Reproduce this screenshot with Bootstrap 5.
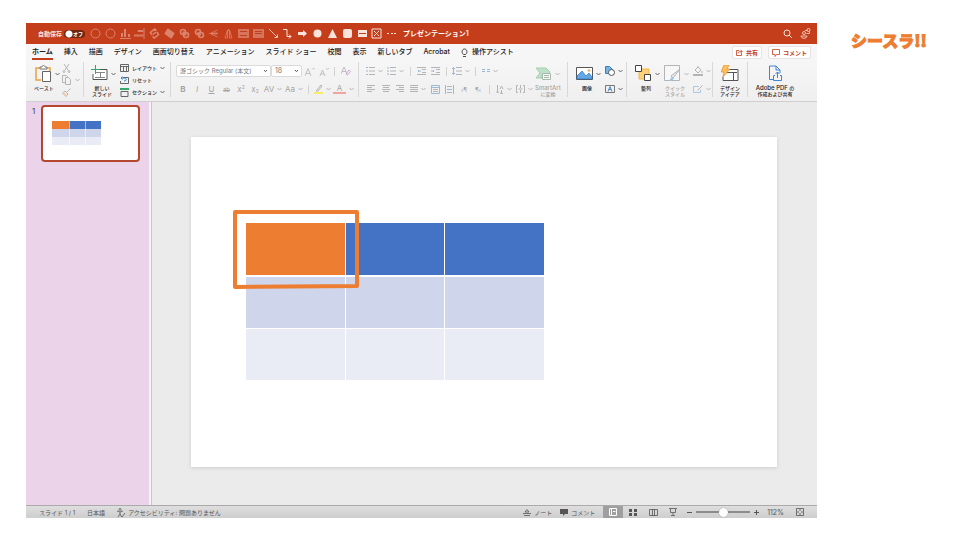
<!DOCTYPE html>
<html lang="ja">
<head>
<meta charset="utf-8">
<meta name="viewport" content="width=device-width, initial-scale=1">
<title>プレゼンテーション1</title>
<link href="https://cdn.jsdelivr.net/npm/bootstrap@5.3.0/dist/css/bootstrap.min.css" rel="stylesheet">
<style>
:root{--brand:#c43e1c;--orange:#ed7d31;--blue:#4472c4}
body{font-family:Inter,"Noto Sans CJK JP",sans-serif;font-size:6px;line-height:7px;color:#222;background:#fff}
.page{min-height:100vh;padding:23px 0 22px 26px}
.side{width:143px;padding:5px 0 0 34px}
.logo{font-family:"Noto Sans CJK JP",sans-serif;font-weight:900;font-size:16px;line-height:24px;color:var(--orange);-webkit-text-stroke:1px var(--orange)}
.app-frame{min-width:0;background:#f3f2f1}
svg{display:block;fill:none;stroke:currentColor;stroke-width:1;flex:none}
.tool{--bs-btn-padding-x:0;--bs-btn-padding-y:0;--bs-btn-border-width:0;--bs-btn-font-size:6px;--bs-btn-line-height:7px;--bs-btn-border-radius:0;--bs-btn-color:inherit;display:flex;align-items:center;justify-content:center;gap:3px;min-width:0;white-space:nowrap}
.titlebar{height:21px;background:var(--brand);color:#fbe3dc;padding:0 6px 0 12px}
.autosave{width:50px;gap:2px;font-weight:600;white-space:nowrap}
.autosave input{appearance:none;width:21px;height:8px;border-radius:4px;background:radial-gradient(circle at 5px 4px,#fff 3px,transparent 4px) #6d2814;margin:0}
.switch-box{position:relative;display:flex}
.switch-box span{position:absolute;right:2px;top:0;font-size:5px;line-height:8px;color:#fff}
.quick{width:311px}
.quick .tool{flex:1}
.dim{opacity:.42}
.doc-name{font-size:7px;line-height:10px;font-weight:600;color:#fff;margin-left:4px}
.tabs{height:16px;padding:0 6px;background:#f7f6f6}
.tabs a{font-size:7px;line-height:16px;height:16px;font-weight:500;color:#222;text-decoration:none;white-space:nowrap}
.tabs a.active{box-shadow:inset 0 -2px var(--brand);font-weight:700}
.tab-list{gap:11px}
.act-row{gap:6px}
.act{--bs-btn-color:var(--brand);background:#fff;border:1px solid #e6e3e2;border-radius:2px;height:13px;padding:0 3px;font-weight:600;margin-top:2px}
.ribbon{height:42px;padding:2px 0 4px;background:linear-gradient(#f7f6f6,#f0efef);border-bottom:1px solid #cfcfcf}
.ribbon svg{color:#666}
.ribbon .off svg{color:#b4b4b4}
.ribbon .text-primary{color:#3d84d6!important}
.grp{border-right:1px solid #d8d8d8;flex:none}
.g-paste{width:58px;padding-left:8px}
.g-slides{width:87px;padding-left:7px}
.g-font{width:188px;padding-left:5px}
.g-para{width:209px;padding-left:5px}
.g-insert{width:59px;padding-left:8px}
.g-style{width:86px;padding-left:8px}
.g-idea{width:35px}
.g-pdf{width:54px;border:0}
.big{flex-direction:column;justify-content:flex-start;gap:3px}
.big .face{display:flex;align-items:center;gap:3px;padding-top:3px;height:20px}
.cap{font-size:5px;line-height:6px;font-weight:500;text-align:center;padding-right:3px}
.cap b{font-size:6px;font-weight:500}
.g-idea .cap,.g-pdf .cap,.g-para .cap{padding:0}
.off{color:#a5a5a5}
.rows3{display:grid;grid-template-rows:repeat(3,12px)}
.rows2{display:grid;grid-template-rows:18px 18px}
.line{display:grid;align-items:center}
.f1{grid-template-columns:95px 31px 15px 14px 7px 16px}
.f2{grid-template-columns:14px 14px 15px 15px 14px 14px 22px 20px 8px 21px 21px}
.p1{grid-template-columns:21px 21px 8px 14px 14px 8px 22px 7px 22px}
.p2{grid-template-columns:14px 15px 14px 21px 14px 15px 14px 14px 8px 21px 21px}
.bar{width:1px;height:9px;background:#d2d2d2;justify-self:center}
.pick{appearance:none;height:12px;font-size:6px;line-height:10px;padding:0 8px 0 3px;color:#777;border:1px solid #dadada;border-radius:2px;background:#fff url("data:image/svg+xml,%3Csvg xmlns='http://www.w3.org/2000/svg' viewBox='0 0 5 4'%3E%3Cpath d='M1 1l1.5 1.7L4 1' fill='none' stroke='%23555'/%3E%3C/svg%3E") right 2px center/5px 4px no-repeat;width:100%;min-width:0}
.pick.num-pick{font-size:7px}
.txt{font-size:8px;line-height:9px}
.txt sup,.txt sub{font-size:5px}
.ink{border-bottom:2px solid #f0a49c;line-height:8px}
.small-cap{font-size:5px;line-height:7px;font-weight:500}
.work{min-height:0}
.thumbs{width:126px;background:#ebd4ea;border-right:1px solid #c8c8c8;box-shadow:inset -2px 0 #f7f2f7;padding:3px 0 0 6px;gap:6px}
.thumb{width:99px;height:57px;background:#fff;border:2px solid #b3472f;border-radius:4px;padding:14px 9px}
.num{font-size:8px;line-height:13px;color:#444}
.stage{background:#ebebeb;padding:35px 40px 37px 39px;min-width:0}
.slide{width:100%;aspect-ratio:16/9;background:#fff;box-shadow:0 1px 4px #0002;padding:86px 0 0 55px}
.grid-wrap{position:relative;width:298px}
.cells{border-collapse:separate;border-spacing:1px;table-layout:fixed;width:calc(100% + 2px);margin:-1px}
.cells td{height:51px;padding:0;background:#e9ebf5}
.cells tr:nth-child(2) td{background:#cfd5ea}
.cells tr:first-child td{height:52px;background:var(--blue)}
.cells tr:first-child td:first-child{background:var(--orange)}
.cells.main tr:nth-child(2) td{border-top:1px solid #fff;height:52px}
.mini{border-spacing:0;width:49px;margin:0}
.mini td,.mini tr:first-child td{height:8px}
.mini td+td{border-left:1px solid #fff8}
.outline{position:absolute;left:-13px;top:-12px;color:var(--orange)}
.status{height:13px;background:linear-gradient(#dedede,#cecece);border-top:1px solid #aaa;color:#555;padding:0 13px;white-space:nowrap}
.status .on{background:#9f9f9f;color:#fff}
.view{width:20px;height:12px}
.percent{font-size:7px}
.zoomer{appearance:none;width:54px;height:10px;background:linear-gradient(#8c8c8c,#8c8c8c) center/100% 2px no-repeat;margin:0}
.zoomer::-webkit-slider-thumb{appearance:none;width:9px;height:9px;border-radius:50%;background:#fff;box-shadow:0 0 1px #777}
</style>
<script src="https://cdn.jsdelivr.net/npm/bootstrap@5.3.0/dist/js/bootstrap.bundle.min.js"></script>
</head>
<body>
<svg width="0" height="0" class="position-absolute" aria-hidden="true">
<symbol id="chev" viewBox="0 0 5 4"><path d="M.5 1l2 2 2-2"/></symbol>
</svg>
<div class="page d-flex">
<main class="app-frame d-flex flex-column flex-fill">
<header class="titlebar d-flex align-items-center">
  <label class="autosave d-flex align-items-center">自動保存<span class="switch-box"><input type="checkbox" role="switch"><span>オフ</span></span></label>
  <div class="quick d-flex">
    <button class="btn tool dim" aria-label="円"><svg width="11" height="11"><circle cx="5.500" cy="5.500" r="4.500"/></svg></button>
    <button class="btn tool dim" aria-label="楕円"><svg width="11" height="11"><circle cx="5.500" cy="5.500" r="4.500"/></svg></button>
    <button class="btn tool dim" aria-label="下揃え"><svg width="11" height="11"><path d="M0 10.500h11"/><path d="M1 5h2v4H1zM4 1h2v8H4zM8 6h2v3H8z" fill="currentColor" stroke="none"/></svg></button>
    <button class="btn tool dim" aria-label="右揃え"><svg width="11" height="11"><path d="M10 0v11M4 2.500h5v1H4zM0 7h9v1H0z"/></svg></button>
    <button class="btn tool dim" aria-label="接合"><svg width="11" height="11"><path d="M7.500 2.500L5.500 1 1.500 4.500 3 7M3.500 8.500l2 1.500 4-3.500L8 4M4 6.500l3-2.500" stroke-width="1.600"/></svg></button>
    <button class="btn tool dim" aria-label="結合"><svg width="11" height="11"><path d="M4 1.500l5.500 4-2.500 4-5.500-4z" fill="currentColor" stroke-width="2" stroke-linejoin="round"/></svg></button>
    <button class="btn tool dim" aria-label="切り出し"><svg width="11" height="11"><circle cx="4" cy="4" r="2.500" stroke-width="1.600"/><circle cx="7" cy="7" r="2.500" stroke-width="1.600"/><path d="M4 4h3v3H4z" fill="currentColor"/></svg></button>
    <button class="btn tool dim" aria-label="重なり抽出"><svg width="11" height="11"><circle cx="4" cy="4" r="2.500" stroke-width="1.600"/><circle cx="7" cy="7" r="2.500" stroke-width="1.600"/><path d="M3.500 4.500l3 3" stroke-width="2"/></svg></button>
    <button class="btn tool dim" aria-label="左右反転"><svg width="11" height="11"><path d="M1 5.500h9M9.500 2L3 5h6.500M9.500 9L3 6h6.500" stroke-width=".8"/></svg></button>
    <button class="btn tool dim" aria-label="上下反転"><svg width="11" height="11"><path d="M5.500 1v2M4.500 2v8H2zM6.500 2v8H9z" stroke-width=".8"/></svg></button>
    <button class="btn tool dim" aria-label="中央配置"><svg width="11" height="11"><path d="M0 1h11v9H0z" fill="currentColor" stroke="none" opacity=".8"/><path d="M2 3.500h7M2 7.500h7" stroke="#c43e1c"/></svg></button>
    <button class="btn tool dim" aria-label="上配置"><svg width="11" height="11"><path d="M0 1h11v9H0z" fill="currentColor" stroke="none" opacity=".8"/><path d="M2 3.500h7M2 5.500h7" stroke="#c43e1c"/></svg></button>
    <button class="btn tool" aria-label="線"><svg width="11" height="11"><path d="M1 1l8 8M9.500 6.500v3h-3" stroke-width=".8"/></svg></button>
    <button class="btn tool" aria-label="コネクタ"><svg width="11" height="11"><path d="M1 1.500h4v7h4M7 6.500l2 2-2 2"/></svg></button>
    <button class="btn tool" aria-label="矢印"><svg width="11" height="11"><path d="M1 4h5V2l4 3.500L6 9V7H1z" fill="currentColor" stroke="none"/></svg></button>
    <button class="btn tool" aria-label="塗り円"><svg width="11" height="11"><circle cx="5.500" cy="5.500" r="4" fill="currentColor" stroke="none"/></svg></button>
    <button class="btn tool" aria-label="三角形"><svg width="11" height="11"><path d="M5.500 1l4.500 9H1z" fill="currentColor" stroke="none"/></svg></button>
    <button class="btn tool" aria-label="角丸四角形"><svg width="11" height="11"><rect x="1" y="1" width="9" height="9" rx="2" fill="currentColor" stroke="none"/></svg></button>
    <button class="btn tool" aria-label="テキスト"><svg width="11" height="11"><path d="M1 2h9v7H1z" fill="currentColor" stroke="none"/><path d="M2 5.500h7" stroke="#c43e1c"/></svg></button>
    <button class="btn tool" aria-label="閉じる"><svg width="11" height="11"><path d="M1 1h9v9H1zM3 3l5 5M8 3L3 8"/></svg></button>
    <button class="btn tool" aria-label="その他"><svg width="11" height="11"><path d="M1 5h2v1H1zM5 5h2v1H5zM8 5h2v1H8z" fill="currentColor" stroke="none"/></svg></button>
  </div>
  <div class="doc-name me-auto">プレゼンテーション1</div>
  <button class="btn tool me-2" aria-label="検索"><svg width="9" height="9"><circle cx="4" cy="4" r="3"/><path d="M6 6l3 3"/></svg></button>
  <button class="btn tool" aria-label="共同作業"><svg width="11" height="11"><circle cx="4" cy="5" r="1.500" stroke-width=".8"/><path d="M1 8h6c0 3-6 3-6 0zM5 2.500h2M6.500 5.500h3v-2" stroke-width=".8"/><circle cx="8.500" cy="2" r="1.500" stroke-width=".8"/></svg></button>
</header>
<nav class="tabs d-flex align-items-start justify-content-between">
  <div class="tab-list d-flex">
    <a href="#" class="active">ホーム</a><a href="#">挿入</a><a href="#">描画</a><a href="#">デザイン</a><a href="#">画面切り替え</a><a href="#">アニメーション</a><a href="#">スライド ショー</a><a href="#">校閲</a><a href="#">表示</a><a href="#">新しいタブ</a><a href="#">Acrobat</a>
    <a href="#" class="d-flex align-items-center gap-1"><svg width="7" height="9"><path d="M2.500 6.500C0 4.500 1 1 3.500 1S7 4.500 4.500 6.500zM2 8.500h3" stroke-width=".8"/></svg>操作アシスト</a>
  </div>
  <div class="d-flex act-row">
    <button class="btn tool act"><svg width="7" height="7"><path d="M3 1.500H.5v5h5V4M2 4.500C2 3 3 2.500 6 2.500M4.500.8l1.700 1.700-1.700 1.700" stroke-width=".8"/></svg>共有</button>
    <button class="btn tool act"><svg width="8" height="8"><path d="M.5.5h7v5h-3L3 7.500v-2H.5z" stroke-width=".8"/></svg>コメント</button>
  </div>
</nav>
<section class="ribbon d-flex" aria-label="リボン">
  <div class="grp g-paste d-flex">
    <button class="btn tool big"><span class="face"><svg width="17" height="17"><path d="M5 3H1v12h5M12 3h3v3" stroke="#e8a33d" stroke-width="1.500"/><path d="M5 4V2h2c0-2 3-2 3 0h2v2z" stroke="#777" fill="#fff"/><path d="M7.500 6.500h8v10h-8z" stroke="#666" fill="#fff"/></svg><svg width="5" height="4"><use href="#chev"/></svg></span><span class="cap pe-2">ペースト</span></button>
    <div class="rows3 off">
      <button class="btn tool justify-content-start" aria-label="切り取り"><svg width="9" height="9"><path d="M2 0l4 6M7 0L3 6"/><circle cx="2" cy="7.500" r="1"/><circle cx="7" cy="7.500" r="1"/></svg></button>
      <button class="btn tool" aria-label="コピー"><svg width="10" height="10"><path d="M3.500 7.500h-3v-7h4l1 1v1M3.500 2.500h3l2 2v5h-5z"/></svg><svg width="5" height="4"><use href="#chev"/></svg></button>
      <button class="btn tool justify-content-start" aria-label="書式のコピー"><svg width="9" height="9"><path d="M8.500.5L5 4M3 3l3 3-2 2.500L.5 5z"/><path d="M2 4l3 3-1 1.500L.5 5z" fill="#f2cda5" stroke="none"/></svg></button>
    </div>
  </div>
  <div class="grp g-slides d-flex">
    <button class="btn tool big"><span class="face"><svg width="17" height="17"><path d="M6 4.500h10v10H2V9" stroke="#555" fill="#fff"/><path d="M5 7.500h9M9.500 7.500v5M4 12.500h10" stroke="#888"/><path d="M4.500 0v9M0 4.500h9" stroke="#2fa866"/></svg><svg width="5" height="4"><use href="#chev"/></svg></span><span class="cap">新しい<br>スライド</span></button>
    <div class="rows3 small-cap ms-1">
      <button class="btn tool justify-content-start small-cap"><svg width="9" height="8"><path d="M.5.5h8v7h-8z"/><path d="M0 2.500h9M3.500 3v4M6.500 3v4"/></svg><span>レイアウト</span><svg width="5" height="4"><use href="#chev"/></svg></button>
      <button class="btn tool justify-content-start small-cap"><svg width="9" height="8"><path d="M3 1.500h5.500v6h-8V5"/><path d="M4 5c3 0 3-3 0-3H1M2.500.5L1 2l1.500 1.500" stroke="#2b83cf"/></svg><span>リセット</span></button>
      <button class="btn tool justify-content-start small-cap"><svg width="9" height="9"><path d="M0 1h9" stroke="#38a86d" stroke-width="2"/><path d="M1 3.500h7v5H1z"/></svg><span>セクション</span><svg width="5" height="4"><use href="#chev"/></svg></button>
    </div>
  </div>
  <div class="grp g-font rows2 off">
    <div class="line f1">
      <select class="pick" aria-label="フォント"><option>游ゴシック Regular (本文)</option></select>
      <select class="pick num-pick" aria-label="サイズ"><option>18</option></select>
      <button class="btn tool" aria-label="拡大文字"><svg width="10" height="9"><path d="M0 9l3-7.500L6 9M1 6.500h4M7 2.500L8.500 1 10 2.500" stroke-width=".8"/></svg></button><button class="btn tool" aria-label="縮小文字"><svg width="10" height="9"><path d="M1 9l2.500-6L6 9M2 7h3M7 1l1.500 1.500L10 1" stroke-width=".8"/></svg></button><span class="bar"></span>
      <button class="btn tool" aria-label="書式のクリア"><svg width="10" height="10"><path d="M0 8l3-7 3 7M1 5.500h4" stroke-width=".8"/><path d="M5 8l3-4 1.500 1.500L6.500 9z" stroke="#c39acb" stroke-width=".8"/></svg></button>
    </div>
    <div class="line f2">
      <button class="btn tool txt"><b>B</b></button><button class="btn tool txt"><i>I</i></button><button class="btn tool txt"><u>U</u></button><button class="btn tool"><s>ab</s></button><button class="btn tool txt"><span>x<sup>2</sup></span></button><button class="btn tool txt"><span>x<sub>2</sub></span></button>
      <button class="btn tool txt">AV<svg width="5" height="4"><use href="#chev"/></svg></button>
      <button class="btn tool txt">Aa<svg width="5" height="4"><use href="#chev"/></svg></button>
      <span class="bar"></span>
      <button class="btn tool" aria-label="蛍光ペン"><svg width="9" height="10"><path d="M3 6l4-5 1 1-4 5H2z"/><path d="M0 9h9" stroke="#f4ef6a" stroke-width="2"/></svg><svg width="5" height="4"><use href="#chev"/></svg></button>
      <button class="btn tool" aria-label="文字の色"><span class="txt ink px-1">A</span><svg width="5" height="4"><use href="#chev"/></svg></button>
    </div>
  </div>
  <div class="grp g-para d-flex off">
    <div class="rows2">
      <div class="line p1">
        <button class="btn tool" aria-label="箇条書き"><svg width="9" height="8"><path d="M3 .5h6M3 4h6M3 7.500h6"/><path d="M0 .5h2M0 4h2M0 7.500h2" stroke="#9bb8d6"/></svg><svg width="5" height="4"><use href="#chev"/></svg></button>
        <button class="btn tool" aria-label="段落番号"><svg width="9" height="8"><path d="M3 .5h6M3 4h6M3 7.500h6"/><path d="M1 0v2M1 3v2M1 6v2" stroke="#9bb8d6"/></svg><svg width="5" height="4"><use href="#chev"/></svg></button>
        <span class="bar"></span>
        <button class="btn tool" aria-label="インデント解除"><svg width="9" height="8"><path d="M0 .5h9M5 2.500h4M5 5.500h4M0 7.500h9"/><path d="M4 4H1M2 3L1 4l1 1" stroke="#9bb8d6"/></svg></button>
        <button class="btn tool" aria-label="インデント"><svg width="9" height="8"><path d="M0 .5h9M5 2.500h4M5 5.500h4M0 7.500h9"/><path d="M0 4h3M2 3l1 1-1 1" stroke="#9bb8d6"/></svg></button>
        <span class="bar"></span>
        <button class="btn tool" aria-label="行間"><svg width="10" height="8"><path d="M4 .5h6M4 4h6M4 7.500h6"/><path d="M1.500 1v6M0 2l1.500-1.500L3 2M0 6l1.500 1.500L3 6" stroke="#9bb8d6"/></svg><svg width="5" height="4"><use href="#chev"/></svg></button>
        <span class="bar"></span>
        <button class="btn tool" aria-label="段組み"><svg width="8" height="6"><path d="M0 1.500h3M0 3.500h3M5 1.500h3M5 3.500h3" stroke="#9bb8d6"/></svg><svg width="5" height="4"><use href="#chev"/></svg></button>
      </div>
      <div class="line p2">
        <button class="btn tool" aria-label="左揃え"><svg width="8" height="8"><path d="M0 .5h8M0 2.500h5M0 4.500h8M0 6.500h5"/></svg></button>
        <button class="btn tool" aria-label="中央揃え"><svg width="8" height="8"><path d="M0 .5h8M1 2.500h6M0 4.500h8M1 6.500h6"/></svg></button>
        <button class="btn tool" aria-label="右揃え段落"><svg width="8" height="8"><path d="M0 .5h8M3 2.500h5M0 4.500h8M3 6.500h5"/></svg></button>
        <button class="btn tool" aria-label="両端揃え"><svg width="8" height="8"><path d="M0 .5h8M0 2.500h8M0 4.500h8M0 6.500h8"/></svg><svg width="5" height="4"><use href="#chev"/></svg></button>
        <button class="btn tool" aria-label="上"><svg width="9" height="9"><path d="M.5.500h8v8h-8z" stroke="#9bb8d6"/><path d="M1 2.500h7" stroke="#9bb8d6"/><path d="M2 4.500h5M2 6.500h5"/></svg></button>
        <button class="btn tool" aria-label="均等"><svg width="9" height="9"><path d="M.5 0v9M8.500 0v9M2 4.500h5" stroke="#9bb8d6"/><path d="M2 1.500h5M2 7.500h5"/></svg></button>
        <button class="btn tool">›¶</button><button class="btn tool">¶‹</button>
        <span class="bar"></span>
        <button class="btn tool" aria-label="文字列の方向"><svg width="8" height="9"><path d="M1.500 0v8M0 6.500L1.500 8 3 6.500M4 4l1.500-3L7 4M5.500 5v4M4 8l1.500 1L7 8"/></svg><svg width="5" height="4"><use href="#chev"/></svg></button>
        <button class="btn tool" aria-label="文字の配置"><svg width="9" height="8"><path d="M2 .5H.5v7H2M7 .5h1.500v7H7M4.500 0v3M4.500 5v3M2.500 4h4"/></svg><svg width="5" height="4"><use href="#chev"/></svg></button>
      </div>
    </div>
    <button class="btn tool big off"><span class="face"><svg width="17" height="15"><path d="M1 2h10l4 4-3 3H7v3H1l4-5z" fill="#bfe0c8" stroke="#a3cfae"/><path d="M7.500 7.500h8v6h-8zM9 9.500h5M9 11.500h5" fill="#f5f5f5" stroke="#a9b9ad"/></svg><svg width="5" height="4"><use href="#chev"/></svg></span><span class="cap"><b>SmartArt</b><br>に変換</span></button>
  </div>
  <div class="grp g-insert d-flex">
    <button class="btn tool big"><span class="face"><svg width="17" height="15"><path d="M.5 1.500h16v12H.5z" fill="#fff" stroke="#555"/><path d="M1 10l5-5 4 5 3-3 3 4v2H1z" fill="#62a8e5" stroke="#2b78c2" stroke-width=".7"/><path d="M12 4h2v1h-2z" stroke="#ed9b50"/></svg><svg width="5" height="4"><use href="#chev"/></svg></span><span class="cap">画像</span></button>
    <div class="rows2 ms-1">
      <button class="btn tool" aria-label="図形"><svg width="10" height="10"><path d="M.5.500h4l4 4-4 3h-4z" fill="#78b4e8" stroke="#2f7fc8"/><circle cx="6.500" cy="6.500" r="3" fill="#fff" stroke="#555"/></svg><svg width="5" height="4"><use href="#chev"/></svg></button>
      <button class="btn tool" aria-label="テキスト ボックス"><svg width="10" height="8"><path d="M.5.500h9v7h-9z" stroke="#777"/><path d="M3 6.500L5 1.500l2 5M4 4.500h2" stroke="#2370bd" stroke-width=".8"/></svg><svg width="5" height="4"><use href="#chev"/></svg></button>
    </div>
  </div>
  <div class="grp g-style d-flex">
    <button class="btn tool big"><span class="face"><svg width="17" height="17"><path d="M4 4h10v10H4z" fill="#ffd27a" stroke="#f0b64d"/><path d="M.5.500h6v6h-6zM9.500 9.500h6v6h-6z" fill="#fff" stroke="#444"/></svg><svg width="5" height="4"><use href="#chev"/></svg></span><span class="cap">整列</span></button>
    <button class="btn tool big off ms-1"><span class="face"><svg width="17" height="17"><path d="M.5.500h15v15H.5z" fill="#f7f7f7"/><path d="M16 4l-7 9-2-2z" fill="#eee"/><path d="M8 12l2 1c-2 4-4 3-6 3 3-1 2-3 4-4z" fill="#9cc3e6" stroke="none"/></svg><svg width="5" height="4"><use href="#chev"/></svg></span><span class="cap">クイック<br>スタイル</span></button>
    <div class="rows2 off ms-1">
      <button class="btn tool" aria-label="塗りつぶし"><svg width="10" height="10"><path d="M2 4l3-3 3 3-3 3zM5 1V0M9 5v2"/><path d="M0 9h10" stroke-width="2"/></svg><svg width="5" height="4"><use href="#chev"/></svg></button>
      <button class="btn tool" aria-label="枠線"><svg width="10" height="9"><path d="M6 1.500H.5v6h7V5" stroke="#a9c8e4"/><path d="M9.500.5l-5 5"/></svg><svg width="5" height="4"><use href="#chev"/></svg></button>
    </div>
  </div>
  <div class="grp g-idea d-flex justify-content-center">
    <button class="btn tool big"><span class="face"><svg width="18" height="17"><path d="M4 4.500h13v11H2V12M4 7.500h12M12.500 8v7" fill="#fff" stroke="#555"/><path d="M3 0h5L6 4h3L2 12l1-5H0z" fill="#ffc05c" stroke="#e68a2e" stroke-width=".7"/></svg></span><span class="cap">デザイン<br>アイデア</span></button>
  </div>
  <div class="grp g-pdf d-flex justify-content-center">
    <button class="btn tool big"><span class="face"><svg width="15" height="17" class="text-primary"><path d="M5 14.500H1.500V1H8l4 4v3M8 1v4h4M7 10.500H5.500v5h8v-5H12M9.500 13V7M7.500 9l2-2 2 2"/></svg></span><span class="cap"><b>Adobe PDF</b> の<br>作成および共有</span></button>
  </div>
</section>
<section class="work d-flex flex-fill">
  <aside class="thumbs d-flex align-items-start flex-shrink-0">
    <span class="num">1</span>
    <div class="thumb"><table class="cells mini" aria-label="スライド 1"><tr><td></td><td></td><td></td></tr><tr><td></td><td></td><td></td></tr><tr><td></td><td></td><td></td></tr></table></div>
  </aside>
  <div class="stage flex-fill">
    <div class="slide">
      <div class="grid-wrap">
        <table class="cells main" aria-label="表"><tr><td></td><td></td><td></td></tr><tr><td></td><td></td><td></td></tr><tr><td></td><td></td><td></td></tr></table>
        <svg class="outline" width="127" height="80"><path d="M2 2H124v74L2 77z" stroke-width="4" stroke-linejoin="round"/></svg>
      </div>
    </div>
  </div>
</section>
<footer class="status d-flex align-items-center">
  <span>スライド 1 / 1</span><span class="ms-2 ps-1">日本語</span>
  <button class="btn tool ms-2 ps-1 me-auto"><svg width="8" height="9"><circle cx="3" cy="1.500" r="1" stroke-width=".8"/><path d="M0 3l3 1 3-1M3 4v2L1 9M3 6l1 2 1 1 3-4" stroke-width=".8"/></svg>アクセシビリティ: 問題ありません</button>
  <button class="btn tool me-2"><svg width="8" height="7"><path d="M0 4.500h8M1 6.500h6M2 3l2-2.500L6 3z" stroke-width=".8"/></svg>ノート</button>
  <button class="btn tool me-2"><svg width="8" height="8"><path d="M0 1h8v5H5L3 8V6H0z" fill="currentColor" stroke="none"/></svg>コメント</button>
  <button class="btn tool view on" aria-label="標準"><svg width="8" height="8"><path d="M.5.500h7v7h-7zM2.500 1v6M4 3.500h2.500"/></svg></button>
  <button class="btn tool view" aria-label="一覧"><svg width="8" height="7"><path d="M0 0h3v3H0zM5 0h3v3H5zM0 4h3v3H0zM5 4h3v3H5z" fill="currentColor" stroke="none"/></svg></button>
  <button class="btn tool view" aria-label="閲覧"><svg width="9" height="7"><path d="M.5.500h8v6h-8zM3.500 0v7M5.500 0v7" stroke-width=".8"/></svg></button>
  <button class="btn tool view" aria-label="スライド ショー"><svg width="8" height="8"><path d="M0 .5h8M1.500 1v3.500h5V1M4 5v2M2 7.500h4" stroke-width=".8"/></svg></button>
  <button class="btn tool ms-1" aria-label="縮小"><svg width="5" height="5"><path d="M0 2.500h5"/></svg></button>
  <input class="zoomer mx-1" type="range" min="0" max="100" value="50" aria-label="ズーム">
  <button class="btn tool" aria-label="拡大"><svg width="5" height="5"><path d="M0 2.500h5M2.500 0v5"/></svg></button>
  <span class="percent ms-2">112%</span>
  <button class="btn tool ms-2 ps-1" aria-label="合わせる"><svg width="8" height="8"><path d="M.5.500h7v7h-7zM1 4h2M5 4h2M4 1v2M4 5v2" stroke-width=".8"/></svg></button>
</footer>
</main>
<aside class="side flex-shrink-0"><div class="logo">シースラ!!</div></aside>
</div>
</body>
</html>
